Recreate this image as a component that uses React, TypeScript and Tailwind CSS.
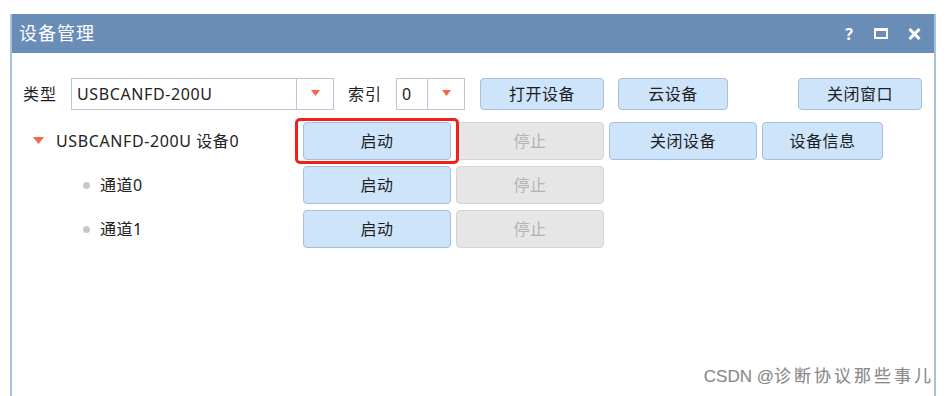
import React from "react";

const font = { fontFamily: '"Noto Sans", "Noto Sans CJK SC", sans-serif' };

function Caret() {
  return (
    <svg width="9" height="6" viewBox="0 0 9 6">
      <path d="M0 0 H9 L4.5 6 Z" fill="#f2664a" />
    </svg>
  );
}

function Combo({ value, width, dropX }: { value: string; width: string; dropX: string }) {
  return (
    <div className={`flex h-[32px] ${width} border border-[#b9c6d6] bg-white`}>
      <div
        className={`flex items-center pl-[5px] ${dropX} border-r border-[#b9c6d6] text-[16px] tracking-[0.6px] text-[#222]`}
      >
        {value}
      </div>
      <div className="flex flex-1 items-center justify-center pb-[2px]">
        <Caret />
      </div>
    </div>
  );
}

function Btn({
  children,
  width,
  disabled = false,
  tall = false,
}: {
  children: React.ReactNode;
  width: string;
  disabled?: boolean;
  tall?: boolean;
}) {
  return (
    <div
      className={`flex items-center justify-center rounded-[4px] border text-[16px] tracking-[0.5px] ${width} ${
        tall ? "h-[38px]" : "h-[32px]"
      } ${
        disabled
          ? "border-[#d4d4d4] bg-[#e6e6e6] text-[#b4b4b4]"
          : "border-[#a7bfdc] bg-[#cde4fb] text-[#1e1e1e]"
      }`}
    >
      {children}
    </div>
  );
}

export default function App() {
  return (
    <div className="h-[396px] w-[949px] overflow-hidden bg-white" style={font}>
      <div className="ml-[10px] mt-[14px] flex h-[382px] w-[926px] flex-col border-x-2 border-[#a9c1e0] bg-white">
        <div className="flex h-[39px] items-center bg-[#6a8db8] pl-[7px] pr-[13px] text-white">
          <span className="text-[18px] tracking-[1px]">设备管理</span>
          <div className="ml-auto flex items-center gap-[20px] text-[16px] font-bold">
            <span className="w-[10px] text-center">?</span>
            <span className="flex h-[11px] w-[14px] items-center border-[2.5px] border-white border-t-[3.5px]" />
            <svg width="13" height="12" viewBox="0 0 13 12">
              <path d="M1.5 1 L11.5 11 M11.5 1 L1.5 11" stroke="#fff" strokeWidth="3" />
            </svg>
          </div>
        </div>

        <div className="mt-[25px] flex items-center pl-[11px] text-[16px] text-[#222]">
          <span className="w-[48px] tracking-[1px]">类型</span>
          <Combo value="USBCANFD-200U" width="w-[263px]" dropX="w-[225px]" />
          <span className="ml-[14px] w-[48px] tracking-[1px]">索引</span>
          <Combo value="0" width="w-[69px]" dropX="w-[31px]" />
          <div className="ml-[15px]">
            <Btn width="w-[124px]">打开设备</Btn>
          </div>
          <div className="ml-[14px]">
            <Btn width="w-[110px]">云设备</Btn>
          </div>
          <div className="ml-[70px]">
            <Btn width="w-[124px]">关闭窗口</Btn>
          </div>
        </div>

        <div className="mt-[12px] flex flex-col gap-[6px] text-[16px] text-[#222]">
          <div className="flex items-center">
            <div className="flex w-[291px] items-center pl-[21px]">
              <svg width="11" height="7" viewBox="0 0 11 7" className="mb-[2px]">
                <path d="M0 0 H11 L5.5 7 Z" fill="#f2664a" />
              </svg>
              <span className="ml-[12px] tracking-[0.6px]">USBCANFD-200U 设备0</span>
            </div>
            <div className="relative">
              <Btn width="w-[148px]" tall>
                启动
              </Btn>
              <div className="absolute -inset-x-[8px] -inset-y-[4px] rounded-[5px] border-[3px] border-[#f0201a]" />
            </div>
            <div className="ml-[5px]">
              <Btn width="w-[148px]" disabled tall>
                停止
              </Btn>
            </div>
            <div className="ml-[5px]">
              <Btn width="w-[148px]" tall>
                关闭设备
              </Btn>
            </div>
            <div className="ml-[5px]">
              <Btn width="w-[121px]" tall>
                设备信息
              </Btn>
            </div>
          </div>
          {["通道0", "通道1"].map((ch) => (
            <div key={ch} className="flex items-center">
              <div className="flex w-[291px] items-center pl-[71px]">
                <span className="h-[7px] w-[7px] rounded-full bg-[#c8c8c8]" />
                <span className="ml-[10px] tracking-[0.5px]">{ch}</span>
              </div>
              <Btn width="w-[148px]" tall>
                启动
              </Btn>
              <div className="ml-[5px]">
                <Btn width="w-[148px]" disabled tall>
                  停止
                </Btn>
              </div>
            </div>
          ))}
        </div>

        <div className="mt-auto mb-[7px] flex justify-end">
          <span
            className="text-[17px] text-[#8a8a8a]"
            style={{ fontFamily: '"Liberation Sans", "Noto Sans CJK SC", sans-serif', textShadow: "0 0 1px #ddd" }}
          >
            CSDN @<span className="tracking-[3px]">诊断协议那些事儿</span>
          </span>
        </div>
      </div>
    </div>
  );
}
